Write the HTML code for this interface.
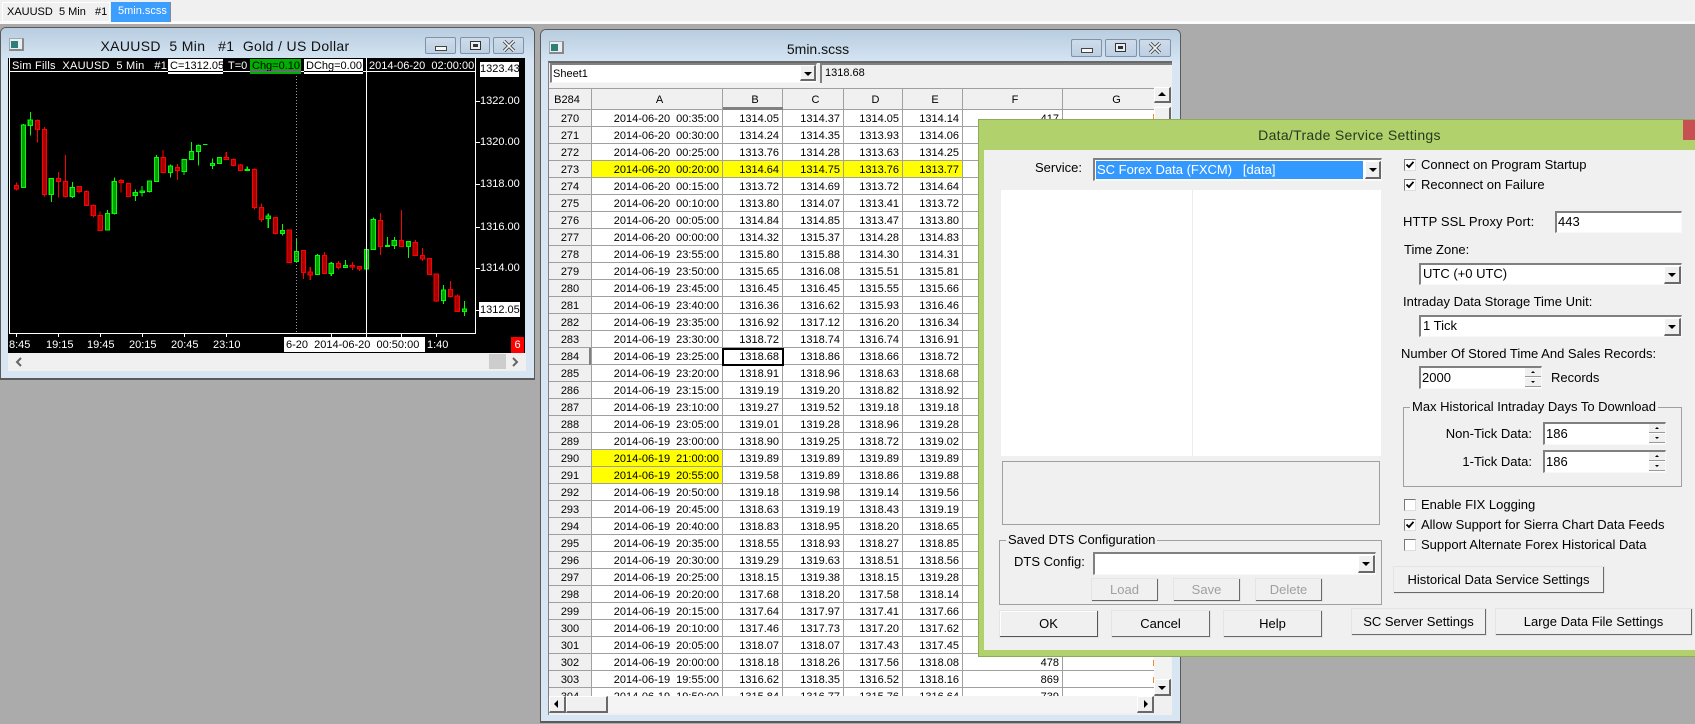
<!DOCTYPE html>
<html><head><meta charset="utf-8"><title>Sierra Chart</title>
<style>
*{box-sizing:border-box}
html,body{margin:0;padding:0;width:1695px;height:724px;overflow:hidden;background:#ababab;font-family:"Liberation Sans",sans-serif;color:#000}
.a{position:absolute}
.t{position:absolute;white-space:pre;line-height:16px;height:16px;font-size:11px}
.d{font-size:13px}
.win{position:absolute;background:#d8e5f2;border:1px solid #5a5a5a;border-bottom:2px solid #5a5a5a;border-radius:6px 6px 0 0}
.bar{position:absolute;left:0;right:0;top:0;height:32px;background:linear-gradient(#b8cde0,#d5e4f2);border-radius:5px 5px 0 0}
.wb{position:absolute;width:32px;height:18px;background:linear-gradient(#cfdcea,#bccfe2);border:1px solid #7f92a9;border-radius:2px}
.ic{position:absolute;width:15px;height:13px;background:#e8eef2;border:1px solid #a0a8b0;border-right:2px solid #888;border-bottom:2px solid #888}
.ic i{position:absolute;left:1px;top:2px;width:7px;height:7px;background:#2f7f78}
.btn{position:absolute;background:#f0f0f0;border:1px solid #fff;border-right:2px solid #696969;border-bottom:2px solid #696969;text-align:center;font-size:13px;white-space:pre;outline:1px solid #e4e4e4;outline-offset:-1px}
.sunk{position:absolute;background:#fff;border-top:2px solid #808080;border-left:2px solid #808080;border-right:1px solid #f8f8f8;border-bottom:1px solid #f8f8f8}
.bb{position:absolute;background:#f0f0f0;border:1px solid #fff;border-right:2px solid #696969;border-bottom:2px solid #696969}
.dd{position:absolute;background:#f0f0f0;border:1px solid #fff;border-right:2px solid #696969;border-bottom:2px solid #696969}
.dd:after{content:"";position:absolute;left:3px;top:6px;border-left:4px solid transparent;border-right:4px solid transparent;border-top:4px solid #000}
.sp{position:absolute;width:16px;height:9px;background:#f0f0f0;border-bottom:1px solid #999}
.sp:after{content:"";position:absolute;left:6px;top:3px;border-left:2px solid transparent;border-right:2px solid transparent}
.sp.u:after{border-bottom:2px solid #000}
.sp.n:after{border-top:2px solid #000}
.cb{position:absolute;width:12px;height:12px;background:#fff;border-top:1px solid #777;border-left:1px solid #777;border-right:1px solid #ddd;border-bottom:1px solid #ddd}
.cb svg{position:absolute;left:0;top:0}
.grp{position:absolute;border:1px solid #a0a0a0}
table{border-collapse:separate;border-spacing:0;table-layout:fixed;font-size:11px}
td,th{font-weight:normal;height:17px;line-height:14px;padding:2px 3px 0 0;text-align:right;border-right:1px solid #a0a0a0;border-bottom:1px solid #a0a0a0;white-space:pre;overflow:hidden}
th{height:22px;line-height:16px;background:#f0f0f0;text-align:center;padding:1px 0 0 5px;border-top:1px solid #a0a0a0}
th.c{padding:1px 6px 0 0}
td.h{background:#f0f0f0;text-align:center;padding:2px 0 0 0}
td.y{background:#ff0}
tr{background:#fff}
</style></head><body>

<!-- top tabs -->
<div class="a" style="left:0;top:0;width:1695px;height:21px;background:#f0f0f0"></div>
<div class="a" style="left:0;top:21px;width:1695px;height:3px;background:#fbfbfb"></div>
<div class="a" style="left:2px;top:2px;width:108px;height:20px;border:1px solid #fff;background:#f0f0f0"></div>
<div class="t" style="left:7px;top:4px;color:#000">XAUUSD  5 Min   #1</div>
<div class="a" style="left:111px;top:2px;width:60px;height:20px;background:#3c9eff;border-right:1px solid #888"></div>
<div class="t" style="left:118px;top:3px;color:#fff">5min.scss</div>

<!-- chart window -->
<div class="win" style="left:0;top:27px;width:535px;height:353px">
  <div class="bar"></div>
</div>
<div class="ic" style="left:9px;top:38px"><i></i></div>
<div class="t" style="left:0;width:450px;text-align:center;top:38px;font-size:14px;color:#111;letter-spacing:.35px">XAUUSD  5 Min   #1  Gold / US Dollar</div>
<div class="wb" style="left:425px;top:37px;width:31px;height:17px"><div class="a" style="left:9px;top:8px;width:12px;height:5px;background:#f4f6f8;border:1px solid #444"></div></div>
<div class="wb" style="left:460px;top:37px;width:30px;height:17px"><div class="a" style="left:9px;top:3px;width:11px;height:9px;border:1px solid #333;background:#e8eef4"><div class="a" style="left:2px;top:2px;width:5px;height:3px;background:#333"></div></div></div>
<div class="wb" style="left:493px;top:37px;width:31px;height:17px"><svg class="a" style="left:8px;top:2px" width="14" height="12" viewBox="0 0 14 12"><path d="M2 1L12 11M12 1L2 11" stroke="#444" stroke-width="3.4"/><path d="M2 1L12 11M12 1L2 11" stroke="#eef2f6" stroke-width="1.6"/></svg></div>

<div class="a" style="left:8px;top:58px;width:517px;height:295px;background:#000"></div>
<svg class="a" style="left:0;top:0" width="535" height="358" viewBox="0 0 535 358">
  <path d="M9.5 58V333.5H475.5V58" fill="none" stroke="#fff" stroke-width="1"/>
  <path d="M475 101.5h5M475 142.5h5M475 184.5h5M475 227.5h5M475 268.5h5M475 310.5h5M16.5 333v4M58.5 333v4M100.5 333v4M142.5 333v4M184.5 333v4M226.5 333v4M331.5 333v4M366.5 333v4M401.5 333v4M436.5 333v4" stroke="#fff" stroke-width="1"/>
  <g transform="scale(.34435 .33333)" shape-rendering="crispEdges">
    <path fill="none" stroke="#f00" stroke-width="3" d="M48 547V572M109 358V428M129 381V590M170 516V593M190 465V592M230 559V581M251 571V617M271 613V653M291 634V692M352 537V578M373 550V590M474 450V518M515 492V540M657 456V479M678 476V500M698 492V513M739 505V628M759 610V666M800 652V704M840 688V788M881 751V837M901 801V840M942 756V822M983 783V809M1023 786V810M1044 799V813M1105 639V765M1166 630V740M1206 720V767M1227 744V783M1247 775V824M1267 820V906M1308 843V892M1328 883V935"/>
    <g fill="#a80000" stroke="#f00" stroke-width="3">
      <rect x="42" y="557" width="12" height="10"/><rect x="103" y="361" width="12" height="27"/><rect x="123" y="388" width="12" height="196"/><rect x="164" y="535" width="12" height="10"/><rect x="184" y="544" width="12" height="46"/><rect x="224" y="559" width="12" height="16"/><rect x="245" y="574" width="12" height="43"/><rect x="265" y="616" width="12" height="31"/><rect x="285" y="646" width="12" height="46"/><rect x="346" y="541" width="12" height="7"/><rect x="367" y="550" width="12" height="40"/><rect x="468" y="472" width="12" height="46"/><rect x="509" y="503" width="12" height="9"/><rect x="651" y="472" width="12" height="7"/><rect x="672" y="478" width="12" height="19"/><rect x="692" y="495" width="12" height="17"/><rect x="733" y="508" width="12" height="114"/><rect x="753" y="622" width="12" height="36"/><rect x="794" y="652" width="12" height="49"/><rect x="834" y="690" width="12" height="98"/><rect x="875" y="751" width="12" height="67"/><rect x="895" y="816" width="12" height="9"/><rect x="936" y="766" width="12" height="55"/><rect x="977" y="790" width="12" height="13"/><rect x="1017" y="796" width="12" height="5"/><rect x="1038" y="799" width="12" height="8"/><rect x="1099" y="661" width="12" height="79"/><rect x="1160" y="721" width="12" height="19"/><rect x="1200" y="727" width="12" height="40"/><rect x="1221" y="766" width="12" height="11"/><rect x="1241" y="775" width="12" height="49"/><rect x="1261" y="822" width="12" height="81"/><rect x="1302" y="868" width="12" height="22"/><rect x="1322" y="888" width="12" height="47"/>
    </g>
    <path fill="none" stroke="#0f0" stroke-width="3" d="M68 372V563M88 336V407M149 535V606M210 546V594M312 630V692M332 532V643M393 568V603M413 558V590M434 541V577M454 465V545M495 494V533M535 478V525M556 426V479M576 433V497M590 433H603M617 475V507M637 473V490M718 499V513M779 640V684M820 672V706M861 715V786M922 762V824M962 786V828M1003 780V804M1064 748V807M1084 652V750M1125 711V740M1145 711V747M1186 724V774M1288 855V912M1349 903V948"/>
    <g fill="#00a000" stroke="#0f0" stroke-width="3">
      <rect x="62" y="375" width="12" height="187"/><rect x="82" y="360" width="12" height="17"/><rect x="143" y="535" width="12" height="49"/><rect x="204" y="562" width="12" height="28"/><rect x="306" y="640" width="12" height="50"/><rect x="326" y="544" width="12" height="97"/><rect x="387" y="577" width="12" height="10"/><rect x="407" y="573" width="12" height="5"/><rect x="428" y="543" width="12" height="32"/><rect x="448" y="472" width="12" height="72"/><rect x="489" y="498" width="12" height="20"/><rect x="529" y="478" width="12" height="36"/><rect x="550" y="455" width="12" height="24"/><rect x="570" y="436" width="12" height="19"/><rect x="611" y="490" width="12" height="6"/><rect x="631" y="473" width="12" height="17"/><rect x="712" y="509" width="12" height="3"/><rect x="773" y="648" width="12" height="8"/><rect x="814" y="691" width="12" height="10"/><rect x="855" y="754" width="12" height="31"/><rect x="916" y="766" width="12" height="57"/><rect x="956" y="790" width="12" height="31"/><rect x="997" y="796" width="12" height="7"/><rect x="1058" y="748" width="12" height="59"/><rect x="1078" y="658" width="12" height="91"/><rect x="1119" y="736" width="12" height="4"/><rect x="1139" y="721" width="12" height="16"/><rect x="1180" y="724" width="12" height="16"/><rect x="1282" y="870" width="12" height="32"/><rect x="1343" y="927" width="12" height="8"/>
    </g>
  </g>
  <path d="M296.5 73V333" stroke="#999" stroke-width="1" stroke-dasharray="1 2"/>
  <path d="M366.5 58V333" stroke="#fff" stroke-width="1"/>
</svg>
<!-- chart header -->
<div class="a" style="left:168px;top:59px;width:55px;height:15px;background:#fff"></div>
<div class="a" style="left:250px;top:59px;width:51px;height:15px;background:#00b000"></div>
<div class="a" style="left:304px;top:59px;width:59px;height:15px;background:#fff"></div>
<div class="t" style="left:12px;top:58px;color:#fff;letter-spacing:.25px">Sim Fills  XAUUSD  5 Min   #1</div>
<div class="t" style="left:170px;top:58px;width:53px;overflow:hidden">C=1312.05</div>
<div class="t" style="left:228px;top:58px;color:#fff">T=0</div>
<div class="t" style="left:252px;top:58px;width:49px;overflow:hidden">Chg=0.10</div>
<div class="t" style="left:306px;top:58px;width:57px;overflow:hidden">DChg=0.00</div>
<div class="t" style="left:369px;top:58px;color:#fff;width:106px;overflow:hidden">2014-06-20  02:00:00</div>
<div class="a" style="left:10px;top:71px;width:465px;height:1px;background:#fff"></div>
<div class="a" style="left:168px;top:71px;width:55px;height:1px;background:#000"></div>
<div class="a" style="left:250px;top:71px;width:51px;height:1px;background:#c030d0"></div>
<div class="a" style="left:304px;top:71px;width:59px;height:1px;background:#000"></div>
<!-- price axis -->
<div class="a" style="left:480px;top:62px;width:39px;height:15px;background:#fff"></div>
<div class="t" style="left:480px;width:39px;text-align:right;top:61px;color:#000">1323.43</div>
<div class="t" style="left:480px;width:39px;text-align:right;top:93px;color:#fff">1322.00</div>
<div class="t" style="left:480px;width:39px;text-align:right;top:134px;color:#fff">1320.00</div>
<div class="t" style="left:480px;width:39px;text-align:right;top:176px;color:#fff">1318.00</div>
<div class="t" style="left:480px;width:39px;text-align:right;top:219px;color:#fff">1316.00</div>
<div class="t" style="left:480px;width:39px;text-align:right;top:260px;color:#fff">1314.00</div>
<div class="a" style="left:479px;top:302px;width:41px;height:15px;background:#fff"></div>
<div class="t" style="left:480px;width:39px;text-align:right;top:302px;color:#000">1312.05</div>
<!-- time axis -->
<div class="t" style="left:9px;top:337px;color:#fff">8:45</div>
<div class="t" style="left:46px;top:337px;color:#fff">19:15</div>
<div class="t" style="left:87px;top:337px;color:#fff">19:45</div>
<div class="t" style="left:129px;top:337px;color:#fff">20:15</div>
<div class="t" style="left:171px;top:337px;color:#fff">20:45</div>
<div class="t" style="left:213px;top:337px;color:#fff">23:10</div>
<div class="a" style="left:284px;top:337px;width:141px;height:15px;background:#fff"></div>
<div class="t" style="left:286px;top:337px;color:#000">6-20  2014-06-20  00:50:00</div>
<div class="t" style="left:427px;top:337px;color:#fff">1:40</div>
<div class="a" style="left:511px;top:337px;width:13px;height:16px;background:#f00"></div>
<div class="t" style="left:511px;width:13px;text-align:center;top:337px;color:#fff">6</div>
<!-- chart scrollbar -->
<div class="a" style="left:8px;top:353px;width:518px;height:18px;background:#f0f0f0"></div>
<div class="a" style="left:489px;top:354px;width:17px;height:15px;background:#cdcdcd"></div>
<svg class="a" style="left:8px;top:353px" width="518" height="18"><path d="M13 5L9 9L13 13M505 5L509 9L505 13" fill="none" stroke="#666" stroke-width="2"/></svg>

<!-- sheet window -->
<div class="win" style="left:540px;top:29px;width:641px;height:694px"><div class="bar"></div></div>
<div class="ic" style="left:549px;top:41px"><i></i></div>
<div class="t" style="left:541px;width:554px;text-align:center;top:41px;font-size:14px;color:#111">5min.scss</div>
<div class="wb" style="left:1071px;top:39px;width:31px"><div class="a" style="left:9px;top:8px;width:12px;height:5px;background:#f4f6f8;border:1px solid #444"></div></div>
<div class="wb" style="left:1105px;top:39px"><div class="a" style="left:9px;top:3px;width:11px;height:9px;border:1px solid #333;background:#e8eef4"><div class="a" style="left:2px;top:2px;width:5px;height:3px;background:#333"></div></div></div>
<div class="wb" style="left:1139px;top:39px"><svg class="a" style="left:8px;top:2px" width="14" height="12" viewBox="0 0 14 12"><path d="M2 1L12 11M12 1L2 11" stroke="#444" stroke-width="3.4"/><path d="M2 1L12 11M12 1L2 11" stroke="#eef2f6" stroke-width="1.6"/></svg></div>

<div class="a" style="left:548px;top:61px;width:624px;height:654px;background:#f0f0f0;border-top:2px solid #696969;border-left:1px solid #808080"></div>
<div class="sunk" style="left:550px;top:63px;width:267px;height:20px"></div>
<div class="dd" style="left:800px;top:65px;width:16px;height:16px"></div>
<div class="t" style="left:553px;top:66px">Sheet1</div>
<div class="a" style="left:820px;top:63px;width:352px;height:20px;border-left:2px solid #808080;border-top:2px solid #808080;background:#f0f0f0"></div>
<div class="t" style="left:825px;top:65px">1318.68</div>

<div class="a" style="left:549px;top:88px;width:605px;height:608px;overflow:hidden;background:#fff">
<table style="width:617px"><colgroup><col style="width:43px"><col style="width:131px"><col style="width:60px"><col style="width:61px"><col style="width:59px"><col style="width:60px"><col style="width:100px"><col style="width:103px"></colgroup>
<tr><th class="c">B284</th><th>A</th><th>B</th><th>C</th><th>D</th><th>E</th><th>F</th><th>G</th></tr>
<tr><td class="h">270</td><td>2014-06-20  00:35:00</td><td>1314.05</td><td>1314.37</td><td>1314.05</td><td>1314.14</td><td>417</td><td></td></tr>
<tr><td class="h">271</td><td>2014-06-20  00:30:00</td><td>1314.24</td><td>1314.35</td><td>1313.93</td><td>1314.06</td><td></td><td></td></tr>
<tr><td class="h">272</td><td>2014-06-20  00:25:00</td><td>1313.76</td><td>1314.28</td><td>1313.63</td><td>1314.25</td><td></td><td></td></tr>
<tr><td class="h">273</td><td class="y">2014-06-20  00:20:00</td><td class="y">1314.64</td><td class="y">1314.75</td><td class="y">1313.76</td><td class="y">1313.77</td><td></td><td></td></tr>
<tr><td class="h">274</td><td>2014-06-20  00:15:00</td><td>1313.72</td><td>1314.69</td><td>1313.72</td><td>1314.64</td><td></td><td></td></tr>
<tr><td class="h">275</td><td>2014-06-20  00:10:00</td><td>1313.80</td><td>1314.07</td><td>1313.41</td><td>1313.72</td><td></td><td></td></tr>
<tr><td class="h">276</td><td>2014-06-20  00:05:00</td><td>1314.84</td><td>1314.85</td><td>1313.47</td><td>1313.80</td><td></td><td></td></tr>
<tr><td class="h">277</td><td>2014-06-20  00:00:00</td><td>1314.32</td><td>1315.37</td><td>1314.28</td><td>1314.83</td><td></td><td></td></tr>
<tr><td class="h">278</td><td>2014-06-19  23:55:00</td><td>1315.80</td><td>1315.88</td><td>1314.30</td><td>1314.31</td><td></td><td></td></tr>
<tr><td class="h">279</td><td>2014-06-19  23:50:00</td><td>1315.65</td><td>1316.08</td><td>1315.51</td><td>1315.81</td><td></td><td></td></tr>
<tr><td class="h">280</td><td>2014-06-19  23:45:00</td><td>1316.45</td><td>1316.45</td><td>1315.55</td><td>1315.66</td><td></td><td></td></tr>
<tr><td class="h">281</td><td>2014-06-19  23:40:00</td><td>1316.36</td><td>1316.62</td><td>1315.93</td><td>1316.46</td><td></td><td></td></tr>
<tr><td class="h">282</td><td>2014-06-19  23:35:00</td><td>1316.92</td><td>1317.12</td><td>1316.20</td><td>1316.34</td><td></td><td></td></tr>
<tr><td class="h">283</td><td>2014-06-19  23:30:00</td><td>1318.72</td><td>1318.74</td><td>1316.74</td><td>1316.91</td><td></td><td></td></tr>
<tr><td class="h">284</td><td>2014-06-19  23:25:00</td><td>1318.68</td><td>1318.86</td><td>1318.66</td><td>1318.72</td><td></td><td></td></tr>
<tr><td class="h">285</td><td>2014-06-19  23:20:00</td><td>1318.91</td><td>1318.96</td><td>1318.63</td><td>1318.68</td><td></td><td></td></tr>
<tr><td class="h">286</td><td>2014-06-19  23:15:00</td><td>1319.19</td><td>1319.20</td><td>1318.82</td><td>1318.92</td><td></td><td></td></tr>
<tr><td class="h">287</td><td>2014-06-19  23:10:00</td><td>1319.27</td><td>1319.52</td><td>1319.18</td><td>1319.18</td><td></td><td></td></tr>
<tr><td class="h">288</td><td>2014-06-19  23:05:00</td><td>1319.01</td><td>1319.28</td><td>1318.96</td><td>1319.28</td><td></td><td></td></tr>
<tr><td class="h">289</td><td>2014-06-19  23:00:00</td><td>1318.90</td><td>1319.25</td><td>1318.72</td><td>1319.02</td><td></td><td></td></tr>
<tr><td class="h">290</td><td class="y">2014-06-19  21:00:00</td><td>1319.89</td><td>1319.89</td><td>1319.89</td><td>1319.89</td><td></td><td></td></tr>
<tr><td class="h">291</td><td class="y">2014-06-19  20:55:00</td><td>1319.58</td><td>1319.89</td><td>1318.86</td><td>1319.88</td><td></td><td></td></tr>
<tr><td class="h">292</td><td>2014-06-19  20:50:00</td><td>1319.18</td><td>1319.98</td><td>1319.14</td><td>1319.56</td><td></td><td></td></tr>
<tr><td class="h">293</td><td>2014-06-19  20:45:00</td><td>1318.63</td><td>1319.19</td><td>1318.43</td><td>1319.19</td><td></td><td></td></tr>
<tr><td class="h">294</td><td>2014-06-19  20:40:00</td><td>1318.83</td><td>1318.95</td><td>1318.20</td><td>1318.65</td><td></td><td></td></tr>
<tr><td class="h">295</td><td>2014-06-19  20:35:00</td><td>1318.55</td><td>1318.93</td><td>1318.27</td><td>1318.85</td><td></td><td></td></tr>
<tr><td class="h">296</td><td>2014-06-19  20:30:00</td><td>1319.29</td><td>1319.63</td><td>1318.51</td><td>1318.56</td><td></td><td></td></tr>
<tr><td class="h">297</td><td>2014-06-19  20:25:00</td><td>1318.15</td><td>1319.38</td><td>1318.15</td><td>1319.28</td><td></td><td></td></tr>
<tr><td class="h">298</td><td>2014-06-19  20:20:00</td><td>1317.68</td><td>1318.20</td><td>1317.58</td><td>1318.14</td><td></td><td></td></tr>
<tr><td class="h">299</td><td>2014-06-19  20:15:00</td><td>1317.64</td><td>1317.97</td><td>1317.41</td><td>1317.66</td><td></td><td></td></tr>
<tr><td class="h">300</td><td>2014-06-19  20:10:00</td><td>1317.46</td><td>1317.73</td><td>1317.20</td><td>1317.62</td><td></td><td></td></tr>
<tr><td class="h">301</td><td>2014-06-19  20:05:00</td><td>1318.07</td><td>1318.07</td><td>1317.43</td><td>1317.45</td><td></td><td></td></tr>
<tr><td class="h">302</td><td>2014-06-19  20:00:00</td><td>1318.18</td><td>1318.26</td><td>1317.56</td><td>1318.08</td><td>478</td><td></td></tr>
<tr><td class="h">303</td><td>2014-06-19  19:55:00</td><td>1316.62</td><td>1318.35</td><td>1316.52</td><td>1318.16</td><td>869</td><td></td></tr>
<tr><td class="h">304</td><td>2014-06-19  19:50:00</td><td>1315.84</td><td>1316.77</td><td>1315.76</td><td>1316.64</td><td>739</td><td></td></tr>
</table>
</div>
<div class="a" style="left:723px;top:107px;width:60px;height:3px;background:#808080"></div>
<div class="a" style="left:589px;top:348px;width:2px;height:17px;background:#808080"></div>
<div class="a" style="left:722px;top:348px;width:62px;height:18px;border:2px solid #000"></div>
<div class="a" style="left:1153px;top:114px;width:1px;height:5px;background:#e89030"></div>
<div class="a" style="left:1153px;top:660px;width:1px;height:6px;background:#e89030"></div>
<div class="a" style="left:1153px;top:677px;width:1px;height:6px;background:#e89030"></div>
<!-- sheet scrollbars -->
<div class="a" style="left:1154px;top:87px;width:17px;height:608px;background:#f3f3f3"></div>
<div class="bb" style="left:1154px;top:87px;width:17px;height:16px"></div>
<div class="a" style="left:1158px;top:92px;border-left:4px solid transparent;border-right:4px solid transparent;border-bottom:4px solid #000"></div>
<div class="bb" style="left:1154px;top:107px;width:17px;height:30px"></div>
<div class="dd" style="left:1154px;top:679px;width:17px;height:17px"></div>
<div class="a" style="left:549px;top:696px;width:622px;height:17px;background:#f4f4f4"></div>
<div class="bb" style="left:549px;top:696px;width:17px;height:17px"></div>
<div class="a" style="left:554px;top:700px;border-top:4px solid transparent;border-bottom:4px solid transparent;border-right:4px solid #000"></div>
<div class="bb" style="left:566px;top:696px;width:42px;height:17px"></div>
<div class="bb" style="left:1137px;top:696px;width:17px;height:17px"></div>
<div class="a" style="left:1144px;top:700px;border-top:4px solid transparent;border-bottom:4px solid transparent;border-left:4px solid #000"></div>
<div class="a" style="left:1154px;top:696px;width:18px;height:17px;background:#f0f0f0"></div>

<!-- dialog -->
<div class="a" style="left:978px;top:119px;width:717px;height:538px;background:#b0d16b;border:1px solid #8faa5a;border-right:0"></div>
<div class="a" style="left:984px;top:150px;width:711px;height:500px;background:#f0f0f0"></div>
<div class="a" style="left:1683px;top:120px;width:12px;height:20px;background:#c75050"></div>
<div class="t" style="left:991px;width:717px;text-align:center;top:127px;font-size:14px;color:#263a20;letter-spacing:.3px">Data/Trade Service Settings</div>

<div class="t d" style="left:1035px;top:160px">Service:</div>
<div class="sunk" style="left:1093px;top:158px;width:289px;height:23px"></div>
<div class="a" style="left:1096px;top:161px;width:267px;height:18px;background:#3399ff"></div>
<div class="t d" style="left:1097px;top:162px;color:#fff">SC Forex Data (FXCM)   [data]</div>
<div class="dd" style="left:1365px;top:161px;width:16px;height:18px"></div>

<div class="a" style="left:1001px;top:190px;width:380px;height:266px;background:#fff"></div>
<div class="a" style="left:1192px;top:190px;width:1px;height:266px;background:#ececec"></div>
<div class="grp" style="left:1002px;top:461px;width:378px;height:64px"></div>

<div class="grp" style="left:999px;top:540px;width:383px;height:65px"></div>
<div class="t d" style="left:1006px;top:532px;background:#f0f0f0;padding:0 2px">Saved DTS Configuration</div>
<div class="t d" style="left:1014px;top:554px">DTS Config:</div>
<div class="sunk" style="left:1093px;top:552px;width:283px;height:23px"></div>
<div class="dd" style="left:1358px;top:555px;width:17px;height:18px"></div>
<div class="btn" style="left:1091px;top:578px;width:68px;height:24px;line-height:21px;color:#a0a0a0">Load</div>
<div class="btn" style="left:1173px;top:578px;width:68px;height:24px;line-height:21px;color:#a0a0a0">Save</div>
<div class="btn" style="left:1255px;top:578px;width:68px;height:24px;line-height:21px;color:#a0a0a0">Delete</div>
<div class="btn" style="left:999px;top:610px;width:100px;height:28px;line-height:25px;border:1px solid #696969;border-right:2px solid #555;border-bottom:2px solid #555;box-shadow:inset 1px 1px 0 #fff">OK</div>
<div class="btn" style="left:1111px;top:610px;width:100px;height:28px;line-height:25px">Cancel</div>
<div class="btn" style="left:1223px;top:610px;width:100px;height:28px;line-height:25px">Help</div>
<div class="btn" style="left:1351px;top:608px;width:136px;height:28px;line-height:25px">SC Server Settings</div>
<div class="btn" style="left:1495px;top:608px;width:198px;height:28px;line-height:25px">Large Data File Settings</div>
<div class="btn" style="left:1393px;top:566px;width:212px;height:28px;line-height:25px">Historical Data Service Settings</div>

<div class="cb" style="left:1404px;top:159px"><svg width="10" height="10" viewBox="0 0 10 10"><path d="M1.5 4.5L4 7L8.5 1.8" fill="none" stroke="#000" stroke-width="1.8"/></svg></div>
<div class="t d" style="left:1421px;top:157px">Connect on Program Startup</div>
<div class="cb" style="left:1404px;top:179px"><svg width="10" height="10" viewBox="0 0 10 10"><path d="M1.5 4.5L4 7L8.5 1.8" fill="none" stroke="#000" stroke-width="1.8"/></svg></div>
<div class="t d" style="left:1421px;top:177px">Reconnect on Failure</div>

<div class="t d" style="left:1403px;top:214px;letter-spacing:.1px">HTTP SSL Proxy Port:</div>
<div class="sunk" style="left:1555px;top:211px;width:127px;height:22px"></div>
<div class="t d" style="left:1558px;top:214px">443</div>

<div class="t d" style="left:1404px;top:242px">Time Zone:</div>
<div class="sunk" style="left:1419px;top:263px;width:263px;height:22px"></div>
<div class="t d" style="left:1423px;top:266px">UTC (+0 UTC)</div>
<div class="dd" style="left:1664px;top:266px;width:17px;height:18px"></div>

<div class="t d" style="left:1403px;top:294px">Intraday Data Storage Time Unit:</div>
<div class="sunk" style="left:1419px;top:315px;width:263px;height:22px"></div>
<div class="t d" style="left:1423px;top:318px">1 Tick</div>
<div class="dd" style="left:1664px;top:318px;width:17px;height:18px"></div>

<div class="t d" style="left:1401px;top:346px">Number Of Stored Time And Sales Records:</div>
<div class="sunk" style="left:1419px;top:366px;width:123px;height:23px"></div>
<div class="t d" style="left:1422px;top:370px">2000</div>
<div class="sp u" style="left:1525px;top:368px"></div><div class="sp n" style="left:1525px;top:378px"></div>
<div class="t d" style="left:1551px;top:370px">Records</div>

<div class="grp" style="left:1403px;top:407px;width:279px;height:80px"></div>
<div class="t d" style="left:1410px;top:399px;background:#f0f0f0;padding:0 2px">Max Historical Intraday Days To Download</div>
<div class="t d" style="left:1400px;width:132px;text-align:right;top:426px">Non-Tick Data:</div>
<div class="sunk" style="left:1543px;top:422px;width:123px;height:23px"></div>
<div class="t d" style="left:1546px;top:426px">186</div>
<div class="sp u" style="left:1649px;top:424px"></div><div class="sp n" style="left:1649px;top:434px"></div>
<div class="t d" style="left:1400px;width:132px;text-align:right;top:454px">1-Tick Data:</div>
<div class="sunk" style="left:1543px;top:450px;width:123px;height:23px"></div>
<div class="t d" style="left:1546px;top:454px">186</div>
<div class="sp u" style="left:1649px;top:452px"></div><div class="sp n" style="left:1649px;top:462px"></div>

<div class="cb" style="left:1404px;top:499px"></div>
<div class="t d" style="left:1421px;top:497px">Enable FIX Logging</div>
<div class="cb" style="left:1404px;top:519px"><svg width="10" height="10" viewBox="0 0 10 10"><path d="M1.5 4.5L4 7L8.5 1.8" fill="none" stroke="#000" stroke-width="1.8"/></svg></div>
<div class="t d" style="left:1421px;top:517px">Allow Support for Sierra Chart Data Feeds</div>
<div class="cb" style="left:1404px;top:539px"></div>
<div class="t d" style="left:1421px;top:537px">Support Alternate Forex Historical Data</div>

</body></html>
